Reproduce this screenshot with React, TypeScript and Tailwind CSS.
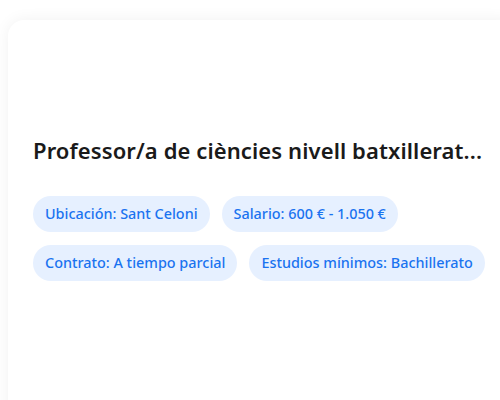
export default function App() {
  const chips = [
    'Ubicación: Sant Celoni',
    'Salario: 600 € - 1.050 €',
    'Contrato: A tiempo parcial',
    'Estudios mínimos: Bachillerato',
  ]

  return (
    <div className="h-[400px] w-[500px] overflow-hidden bg-white pl-2 pt-5 font-['Noto_Sans',sans-serif]">
      <div className="h-[420px] w-[510px] rounded-2xl bg-white px-[25px] pt-[116px] shadow-[0_0_16px_rgba(0,0,0,0.06)]">
        <h2 className="whitespace-nowrap text-[22px] font-semibold leading-7 tracking-[0.1px] text-[#1a1a1a]">
          Professor/a de ciències nivell batxillerat...
        </h2>
        <div className="mt-[32px] flex w-[460px] flex-wrap gap-x-3 gap-y-[13px]">
          {chips.map(c => (
            <span
              key={c}
              className="rounded-full bg-[#e6f0ff] px-3 py-[8px] text-[14.4px] font-medium leading-5 text-[#1a73f0]"
            >
              {c}
            </span>
          ))}
        </div>
      </div>
    </div>
  )
}
